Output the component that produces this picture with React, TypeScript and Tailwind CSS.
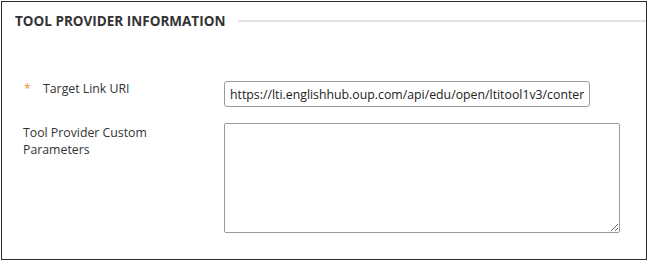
export default function App() {
  return (
    <div className="m-[1px] box-border h-[259px] w-[646px] border border-[#2b2b2b] bg-white font-['Open_Sans',sans-serif] text-[12.3px] leading-[17px] text-[#333]">
      {/* Section heading */}
      <div className="flex items-center pt-[10px] pl-[13px]">
        <h2 className="m-0 text-[13.5px] leading-[18px] font-bold uppercase text-[#333]">Tool Provider Information</h2>
        <div className="ml-[13px] h-[2px] flex-1 bg-[#e2e2e2]" />
      </div>

      {/* Target Link URI */}
      <div className="mt-[49px] ml-[21px] flex items-start">
        <label className="flex w-[201px] pt-[1px]">
          <span className="w-[20px] pl-[1px] text-[#ef8f3c]">*</span>
          <span>Target Link URI</span>
        </label>
        <input
          type="text"
          readOnly
          defaultValue="https://lti.englishhub.oup.com/api/edu/open/ltitool1v3/content/launch"
          className="mt-[2px] box-border h-[26px] w-[366px] rounded-[3px] border border-[#9a9a9a] bg-white px-[5px] font-['Open_Sans',sans-serif] text-[12.3px] text-[#222] outline-none"
        />
      </div>

      {/* Custom parameters */}
      <div className="mt-[16px] ml-[21px] flex items-start">
        <label className="w-[201px] pt-[1px]">
          Tool Provider Custom
          <br />
          Parameters
        </label>
        <textarea className="box-border h-[110px] w-[396px] rounded-[2px] border border-[#9a9a9a] bg-white font-['Open_Sans',sans-serif] text-[12.3px] outline-none" />
      </div>
    </div>
  );
}
